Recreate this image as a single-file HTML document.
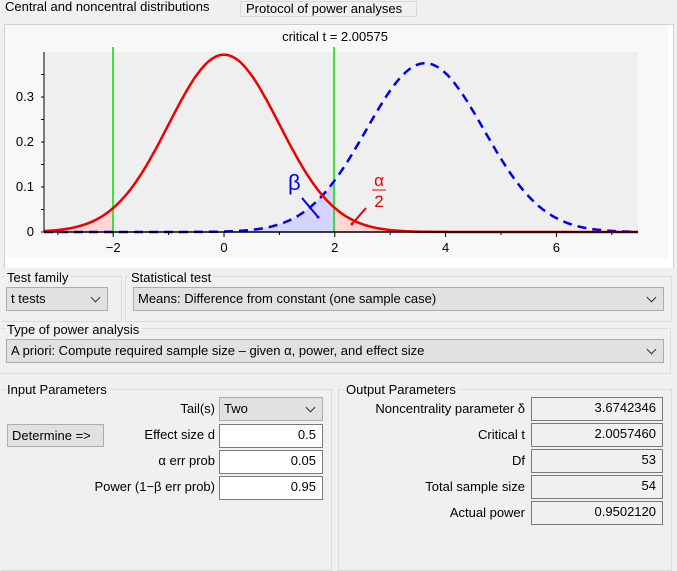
<!DOCTYPE html>
<html><head><meta charset="utf-8"><style>
body{margin:0;width:677px;height:564px;background:#f0f0f0;font-family:"Liberation Sans","DejaVu Sans",sans-serif;font-size:13px;color:#000;position:relative;overflow:hidden}
.a{position:absolute}
.box{position:absolute;border:1px solid #dcdcdc}
.lbl{position:absolute;background:#f0f0f0;padding:0 2px;line-height:15px}
.sel{position:absolute;background:#e1e1e1;border:1px solid #adadad;box-sizing:border-box;line-height:21px;padding-left:4px}
.sel:after{content:"";position:absolute;right:8px;top:6px;width:6px;height:6px;border-right:1px solid #333;border-bottom:1px solid #333;transform:rotate(45deg)}
.in{position:absolute;background:#fff;border:1px solid #7a7a7a;box-sizing:border-box;text-align:right;padding-right:6px;line-height:20px}
.out{position:absolute;background:#f0f0f0;border:1px solid #7a7a7a;box-sizing:border-box;text-align:right;padding-right:6px;line-height:20px}
.r{position:absolute;text-align:right;line-height:20px}
</style></head><body>
<div class="a" style="left:0;top:0;width:238px;height:18px;line-height:14px;padding-left:5px;box-sizing:border-box">Central and noncentral distributions</div>
<div class="a" style="left:240px;top:1px;width:177px;height:16px;border:1px solid #d9d9d9;background:#f0f0f0;line-height:14px;padding-left:5px;box-sizing:border-box">Protocol of power analyses</div>
<div class="a" style="left:4px;top:24px;width:668px;height:243px;border:1px solid #d0d0d0;border-bottom:none;background:#fff"></div>
<svg class="a" style="left:0;top:0" width="677" height="270" id="g">
<rect x="5" y="25" width="663" height="233" fill="#f8f8f8"/>
<rect x="44" y="52" width="594" height="180" fill="#efefef"/>
<text x="335" y="41" text-anchor="middle" font-size="13" font-family="Liberation Sans, sans-serif">critical t =  2.00575</text>
</svg>
<div class="box" style="left:1px;top:276px;width:120px;height:44px;border-left:none"></div>
<div class="lbl" style="left:5px;top:270px">Test family</div>
<div class="sel" style="left:6px;top:287px;width:102px;height:24px">t tests</div>
<div class="box" style="left:125px;top:276px;width:545px;height:44px"></div>
<div class="lbl" style="left:129px;top:270px">Statistical test</div>
<div class="sel" style="left:133px;top:287px;width:531px;height:24px">Means: Difference from constant (one sample case)</div>
<div class="box" style="left:1px;top:328px;width:669px;height:44px;border-left:none"></div>
<div class="lbl" style="left:5px;top:322px">Type of power analysis</div>
<div class="sel" style="left:6px;top:339px;width:658px;height:24px">A priori: Compute required sample size – given α, power, and effect size</div>
<div class="box" style="left:1px;top:389px;width:330px;height:180px;border-left:none"></div>
<div class="lbl" style="left:5px;top:382px">Input Parameters</div>
<div class="box" style="left:338px;top:389px;width:332px;height:180px"></div>
<div class="lbl" style="left:344px;top:382px">Output Parameters</div>
<div class="r" style="left:100px;top:399px;width:115px">Tail(s)</div>
<div class="sel" style="left:219px;top:397px;width:104px;height:24px">Two</div>
<div class="a" style="left:7px;top:424px;width:97px;height:23px;background:#e1e1e1;border:1px solid #adadad;box-sizing:border-box;line-height:21px;padding-left:4px">Determine =&gt;</div>
<div class="r" style="left:100px;top:425px;width:115px">Effect size d</div>
<div class="in" style="left:219px;top:424px;width:104px;height:24px">0.5</div>
<div class="r" style="left:100px;top:451px;width:115px">α err prob</div>
<div class="in" style="left:219px;top:450px;width:104px;height:24px">0.05</div>
<div class="r" style="left:60px;top:477px;width:155px">Power (1−β err prob)</div>
<div class="in" style="left:219px;top:476px;width:104px;height:24px">0.95</div>
<div class="r" style="left:340px;top:399px;width:185px">Noncentrality parameter δ</div>
<div class="out" style="left:531px;top:397px;width:132px;height:24px">3.6742346</div>
<div class="r" style="left:340px;top:425px;width:185px">Critical t</div>
<div class="out" style="left:531px;top:423px;width:132px;height:24px">2.0057460</div>
<div class="r" style="left:340px;top:451px;width:185px">Df</div>
<div class="out" style="left:531px;top:449px;width:132px;height:24px">53</div>
<div class="r" style="left:340px;top:477px;width:185px">Total sample size</div>
<div class="out" style="left:531px;top:475px;width:132px;height:24px">54</div>
<div class="r" style="left:340px;top:503px;width:185px">Actual power</div>
<div class="out" style="left:531px;top:501px;width:132px;height:24px">0.9502120</div>
<script>
var s=document.getElementById('g'),N='http://www.w3.org/2000/svg';
function X(t){return 224+t*55.4}function Y(v){return 232-v*450}
function c(t){return 0.394*Math.exp(-t*t/2)}
function n(t){var z=(t-3.63)/1.06;return 0.375*Math.exp(-z*z/2)}
function P(f,a,b,close){var d='',st=0.02;for(var t=a;t<=b+1e-9;t+=st){d+=(d?'L':'M')+X(t).toFixed(1)+','+Y(f(t)).toFixed(1)}if(close)d+='L'+X(b)+','+232+'L'+X(a)+','+232+'Z';return d}
function add(tag,at){var e=document.createElementNS(N,tag);for(var k in at)e.setAttribute(k,at[k]);s.appendChild(e);return e}
var a0=-3.25,a1=7.47;
add('path',{d:P(c,a0,-2.006,1),fill:'#ffd6d6'});
add('path',{d:P(c,2.006,a1,1),fill:'#ffd6d6'});
add('path',{d:P(n,a0,2.006,1),fill:'#d4d4ff'});
add('line',{x1:113,y1:47,x2:113,y2:232,stroke:'#00e000','stroke-width':1.5});
add('line',{x1:334,y1:47,x2:334,y2:232,stroke:'#00e000','stroke-width':1.5});
add('path',{d:P(n,a0,a1,0),fill:'none',stroke:'#0000ee','stroke-width':2.5,'stroke-dasharray':'9,6'});
add('path',{d:P(c,a0,a1,0),fill:'none',stroke:'#ee0000','stroke-width':2.5});
add('line',{x1:44,y1:232,x2:638,y2:232,stroke:'#000','stroke-width':1.5});
add('line',{x1:44,y1:52,x2:44,y2:232,stroke:'#000','stroke-width':1});
[-3,-2,-1,0,1,2,3,4,5,6,7].forEach(function(t){var x=X(t);add('line',{x1:x,y1:232,x2:x,y2:(t%2?235:237),stroke:'#000'});if(t%2==0){var e=add('text',{x:x,y:252,'text-anchor':'middle','font-size':13});e.textContent=t==-2?'−2':t}});
[0,0.05,0.1,0.15,0.2,0.25,0.3,0.35].forEach(function(v,i){var y=Y(v);add('line',{x1:41,y1:y,x2:44,y2:y,stroke:'#000'});if(i%2==0){var e=add('text',{x:34,y:y+4,'text-anchor':'end','font-size':13});e.textContent=v==0?'0':v}});
var b=add('text',{x:288,y:190,fill:'#0000ee','font-size':22});b.textContent='β';
add('line',{x1:302,y1:198,x2:318,y2:217,stroke:'#0000ee','stroke-width':2});
add('circle',{cx:318,cy:217,r:1.5,fill:'#0000ee'});
var al=add('text',{x:379,y:186,fill:'#ee0000','font-size':17,'text-anchor':'middle'});al.textContent='α';
add('line',{x1:372,y1:190,x2:386,y2:190,stroke:'#ee0000','stroke-width':1});
var tw=add('text',{x:379,y:207,fill:'#ee0000','font-size':17,'text-anchor':'middle'});tw.textContent='2';
add('line',{x1:366,y1:208,x2:352,y2:224,stroke:'#ee0000','stroke-width':2});
add('circle',{cx:352,cy:224,r:1.5,fill:'#ee0000'});
</script>
</body></html>
